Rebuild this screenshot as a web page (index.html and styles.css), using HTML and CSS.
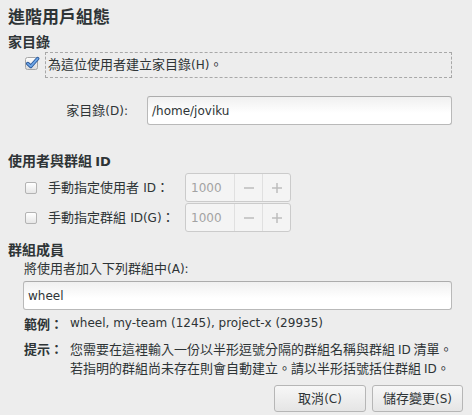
FILE: index.html
```html
<!DOCTYPE html>
<html lang="zh-Hant">
<head>
<meta charset="utf-8">
<title>進階用戶組態</title>
<link rel="stylesheet" href="styles.css">
</head>
<body>
<div class="dialog">
  <h1 class="title">進階用戶組態</h1>

  <h2 class="section sec-home">家目錄</h2>
  <div class="check-row">
    <span class="check-box checked">
      <svg width="15" height="15" viewBox="0 0 15 15" aria-hidden="true">
        <defs>
          <linearGradient id="cbg" x1="0" y1="0" x2="0" y2="1">
            <stop offset="0" stop-color="#ffffff"/>
            <stop offset="1" stop-color="#dadada"/>
          </linearGradient>
        </defs>
        <rect x="0.5" y="1.5" width="12" height="12" rx="2" fill="url(#cbg)" stroke="#a6a6a6"/>
        <path d="M2.8 7.6 L5.8 10.4 L12.6 2.6" fill="none" stroke="#2c5a9c" stroke-width="3.6" stroke-linecap="round" stroke-linejoin="round"/>
        <path d="M2.8 7.6 L5.8 10.4 L12.6 2.6" fill="none" stroke="#6ea6e6" stroke-width="1.8" stroke-linecap="round" stroke-linejoin="round"/>
      </svg>
    </span>
    <label class="focus-label">為這位使用者建立家目錄<span class="l">(H)</span>。</label>
  </div>

  <div class="field-row">
    <label class="field-label">家目錄<span class="l">(D):</span></label>
    <div class="entry"><span class="l">/home/joviku</span></div>
  </div>

  <h2 class="section sec-ids">使用者與群組 <span class="lb">ID</span></h2>
  <div class="id-rows">
    <div class="id-row">
      <span class="check-box unchecked"></span>
      <span class="id-label">手動指定使用者 <span class="l">ID</span>：</span>
      <div class="spin">
        <span class="spin-value"><span class="l">1000</span></span>
        <span class="spin-btn"><svg width="10" height="10" viewBox="0 0 10 10"><path d="M0 5 H10" stroke="#bdbdbd" stroke-width="1.5"/></svg></span>
        <span class="spin-btn"><svg width="10" height="10" viewBox="0 0 10 10"><path d="M0 5 H10 M5 0 V10" stroke="#bdbdbd" stroke-width="1.5"/></svg></span>
      </div>
    </div>
    <div class="id-row">
      <span class="check-box unchecked"></span>
      <span class="id-label">手動指定群組 <span class="l">ID(G)</span>：</span>
      <div class="spin">
        <span class="spin-value"><span class="l">1000</span></span>
        <span class="spin-btn"><svg width="10" height="10" viewBox="0 0 10 10"><path d="M0 5 H10" stroke="#bdbdbd" stroke-width="1.5"/></svg></span>
        <span class="spin-btn"><svg width="10" height="10" viewBox="0 0 10 10"><path d="M0 5 H10 M5 0 V10" stroke="#bdbdbd" stroke-width="1.5"/></svg></span>
      </div>
    </div>
  </div>

  <h2 class="section sec-groups">群組成員</h2>
  <div class="groups">
    <label class="groups-label">將使用者加入下列群組中<span class="l">(A):</span></label>
    <div class="entry entry-wide"><span class="l">wheel</span></div>

    <div class="notes">
      <span class="note-key">範例：</span>
      <span class="note-val l">wheel, my-team (1245), project-x (29935)</span>
      <span class="note-key key-hint">提示：</span>
      <span class="note-val hint">您需要在這裡輸入一份以半形逗號分隔的群組名稱與群組 <span class="l">ID</span> 清單。<br>若指明的群組尚未存在則會自動建立。請以半形括號括住群組 <span class="l">ID</span>。</span>
    </div>
  </div>

  <div class="buttons">
    <button class="btn btn-cancel" type="button">取消<span class="l">(C)</span></button>
    <button class="btn btn-save" type="button">儲存變更<span class="l">(S)</span></button>
  </div>
</div>
</body>
</html>
```

FILE: styles.css
```css
html, body {
  margin: 0;
  padding: 0;
}

body {
  width: 472px;
  height: 415px;
  overflow: hidden;
  background: #ededed;
  color: #2e3436;
  font-family: "DejaVu Sans", "Noto Sans CJK TC", sans-serif;
  font-size: 13px;
  line-height: 20px;
}

.l {
  font-family: "DejaVu Sans", sans-serif;
  font-size: 12px;
}

.lb {
  font-family: "DejaVu Sans", sans-serif;
  font-size: 13px;
  font-weight: bold;
}

.dialog {
  padding: 4px 20px 0 8px;
}

.title {
  margin: 0;
  font-family: "Noto Sans CJK TC", sans-serif;
  font-size: 17px;
  font-weight: bold;
  line-height: 24px;
}

.section {
  margin: 0;
  font-family: "Noto Sans CJK TC", sans-serif;
  font-size: 14px;
  font-weight: bold;
  line-height: 20px;
}

.sec-home { margin-top: 3px; }
.sec-ids { margin-top: 25px; }
.sec-groups { margin-top: 7px; }

/* checkbox row */
.check-row {
  display: flex;
  align-items: center;
  height: 26px;
  margin-top: 1px;
  padding-left: 17px;
}

.check-box {
  display: block;
  flex: none;
}

.check-box.checked {
  width: 15px;
  height: 15px;
  margin-top: -3px;
  margin-right: 5px;
}

.check-box.checked svg {
  display: block;
}

.check-box.unchecked {
  width: 12px;
  height: 12px;
  box-sizing: border-box;
  border: 1px solid #b3b3b3;
  border-radius: 2px;
  background: linear-gradient(#ffffff, #e6e6e6);
}

.focus-label {
  flex: 1;
  height: 26px;
  box-sizing: border-box;
  border: 1px dashed #a8a8a8;
  padding-left: 2px;
  line-height: 24px;
  white-space: nowrap;
}

/* home dir field */
.field-row {
  display: flex;
  align-items: center;
  margin-top: 18px;
}

.field-label {
  width: 120px;
  text-align: right;
  margin-right: 19px;
  white-space: nowrap;
}

.entry {
  flex: 1;
  height: 29px;
  box-sizing: border-box;
  border: 1px solid #b9b9b9;
  border-top-color: #acacac;
  border-radius: 3px;
  background: linear-gradient(#f0f0f0, #ffffff 60%);
  padding-left: 4px;
  line-height: 27px;
  color: #2e3436;
}

/* id rows */
.id-rows {
  display: flex;
  flex-direction: column;
  gap: 1px;
  margin-top: 1px;
}

.id-row {
  display: grid;
  grid-template-columns: 12px 148px 106px;
  align-items: center;
  height: 29px;
  padding-left: 17px;
}

.id-label {
  padding-left: 11px;
  white-space: nowrap;
}

.spin {
  display: flex;
  height: 29px;
  box-sizing: border-box;
  border: 1px solid #cbcbcb;
  border-radius: 3px;
  background: #f4f4f4;
}

.spin-value {
  width: 48px;
  padding-left: 5px;
  box-sizing: border-box;
  line-height: 27px;
  color: #a3a3a3;
}

.spin-btn {
  width: 28px;
  display: flex;
  align-items: center;
  justify-content: center;
  border-left: 1px solid #e0e0e0;
  box-sizing: border-box;
}

.spin-btn svg {
  display: block;
}

/* groups */
.groups {
  padding-left: 16px;
}

.groups-label {
  display: block;
  line-height: 20px;
  white-space: nowrap;
}

.entry-wide {
  margin-top: 2px;
  margin-left: -1px;
}

.notes {
  display: grid;
  grid-template-columns: 46px 1fr;
  row-gap: 8px;
  margin-top: 5px;
  line-height: 17px;
  white-space: nowrap;
}

.note-key {
  font-family: "Noto Sans CJK TC", sans-serif;
  font-weight: bold;
  font-size: 13px;
}

.hint {
  font-family: "Noto Sans CJK TC", sans-serif;
  font-size: 13px;
}

/* buttons */
.buttons {
  display: flex;
  justify-content: flex-end;
  gap: 6px;
  margin-top: 7px;
  margin-right: -11px;
}

.btn {
  height: 27px;
  box-sizing: border-box;
  padding: 0;
  border: 1px solid #b6b6b6;
  border-radius: 3px;
  background: linear-gradient(#f7f7f7, #e5e5e5);
  color: #2e3436;
  font-family: "DejaVu Sans", "Noto Sans CJK TC", sans-serif;
  font-size: 13px;
  line-height: 25px;
  white-space: nowrap;
  text-align: center;
}

.btn-cancel {
  width: 92px;
}

.btn-save {
  width: 91px;
}
```
